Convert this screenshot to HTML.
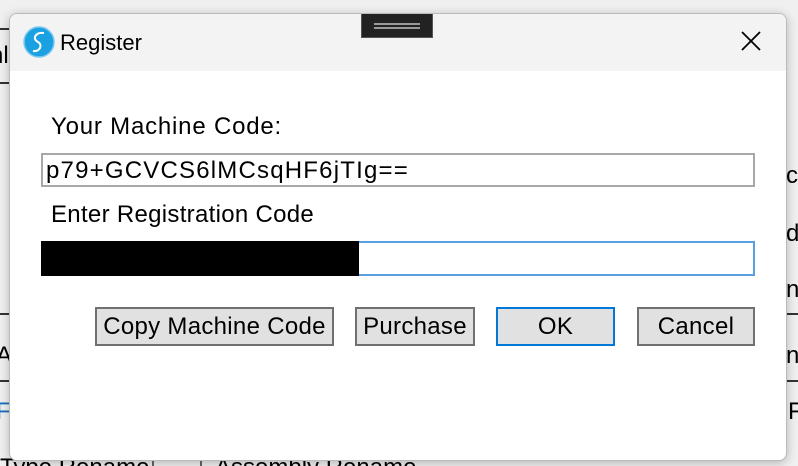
<!DOCTYPE html>
<html style="overflow:hidden;width:798px;height:466px"><head><style>
body{margin:0;width:798px;height:466px;background:#f0f0f0;position:relative;overflow:hidden;font-family:"Liberation Sans",sans-serif;}
.a{position:absolute}
.bg{color:#000;font-size:24px;white-space:nowrap}
.line{position:absolute;height:2px;background:#333}
.dlg{position:absolute;left:9px;top:13px;width:776px;height:446px;background:#fff;border:1px solid #bbb;border-radius:8px;overflow:hidden;box-shadow:0 2px 10px rgba(0,0,0,.25)}
.title{position:absolute;left:0;top:0;width:100%;height:57px;background:#f3f3f3}
.lbl{position:absolute;font-size:24px;color:#000;white-space:nowrap}
.box{position:absolute;box-sizing:border-box}
.btn{position:absolute;box-sizing:border-box;top:293px;height:39px;background:#e1e1e1;border:2px solid #707070;font-size:24px;text-align:center;line-height:35px;white-space:nowrap;letter-spacing:0.3px}
.clip{position:absolute;left:0;top:440px;width:798px;height:26px;overflow:hidden}
</style></head><body>
<div class="line" style="left:0;top:28px;width:12px"></div>
<div class="line" style="left:0;top:82px;width:12px"></div>
<div class="line" style="left:0;top:313px;width:12px"></div>
<div class="line" style="left:786px;top:313px;width:12px"></div>
<div class="line" style="left:0;top:380px;width:12px"></div>
<div class="line" style="left:786px;top:380px;width:12px"></div>
<div class="a bg" style="left:-10px;top:42px">nl</div>
<div class="a bg" style="left:786px;top:162px">cr</div>
<div class="a bg" style="left:786px;top:220px">de</div>
<div class="a bg" style="left:786px;top:276px">n</div>
<div class="a bg" style="left:-4px;top:342px">A</div>
<div class="a bg" style="left:786px;top:342px">ne</div>
<div class="a bg" style="left:-4px;top:398px;color:#1a6fc0">F</div>
<div class="a bg" style="left:788px;top:398px">F</div>
<div class="clip">
 <div class="a bg" style="left:0;top:14px">Type Rename</div>
 <div class="a" style="left:152px;top:18px;width:2px;height:10px;background:#666"></div>
 <div class="a" style="left:200px;top:18px;width:2px;height:10px;background:#666"></div>
 <div class="a bg" style="left:215px;top:14px">Assembly Rename</div>
</div>
<div class="dlg">
 <div class="title">
  <svg class="a" style="left:13px;top:12px" width="32" height="32" viewBox="0 0 32 32"><circle cx="16" cy="16" r="15" fill="#1ba1e2" stroke="#7cc8f0" stroke-width="1.5"/><path d="M21 7 C12 6 9 13 15 16 C20 19 17 26 10 25" fill="none" stroke="#fff" stroke-width="2"/></svg>
  <div class="lbl" style="left:50px;top:16px;font-size:22px">Register</div>
  <svg class="a" style="left:730px;top:16px" width="22" height="22" viewBox="0 0 22 22"><path d="M2 2L20 20M20 2L2 20" stroke="#000" stroke-width="1.8"/></svg>
 </div>
 <div class="a" style="left:351px;top:-1px;width:72px;height:25px;background:#222;border:1px solid #555;box-sizing:border-box"><div class="a" style="left:12px;top:9px;width:46px;height:2px;background:#999"></div><div class="a" style="left:12px;top:13px;width:46px;height:2px;background:#999"></div></div>
 <div class="lbl" style="left:41px;top:99px;letter-spacing:0.8px">Your Machine Code:</div>
 <div class="box" style="left:31px;top:139px;width:714px;height:34px;border:2px solid #a8a8a8"></div>
 <div class="lbl" style="left:36px;top:143px;letter-spacing:1.2px">p79+GCVCS6lMCsqHF6jTIg==</div>
 <div class="lbl" style="left:41px;top:187px;letter-spacing:0.3px">Enter Registration Code</div>
 <div class="box" style="left:31px;top:227px;width:714px;height:35px;border:2px solid #5a9ee0"></div>
 <div class="a" style="left:31px;top:227px;width:318px;height:35px;background:#000"></div>
 <div class="btn" style="left:85px;width:239px">Copy Machine Code</div>
 <div class="btn" style="left:345px;width:120px">Purchase</div>
 <div class="btn" style="left:486px;width:119px;border-color:#0078d7">OK</div>
 <div class="btn" style="left:627px;width:118px">Cancel</div>
</div>
</body></html>
